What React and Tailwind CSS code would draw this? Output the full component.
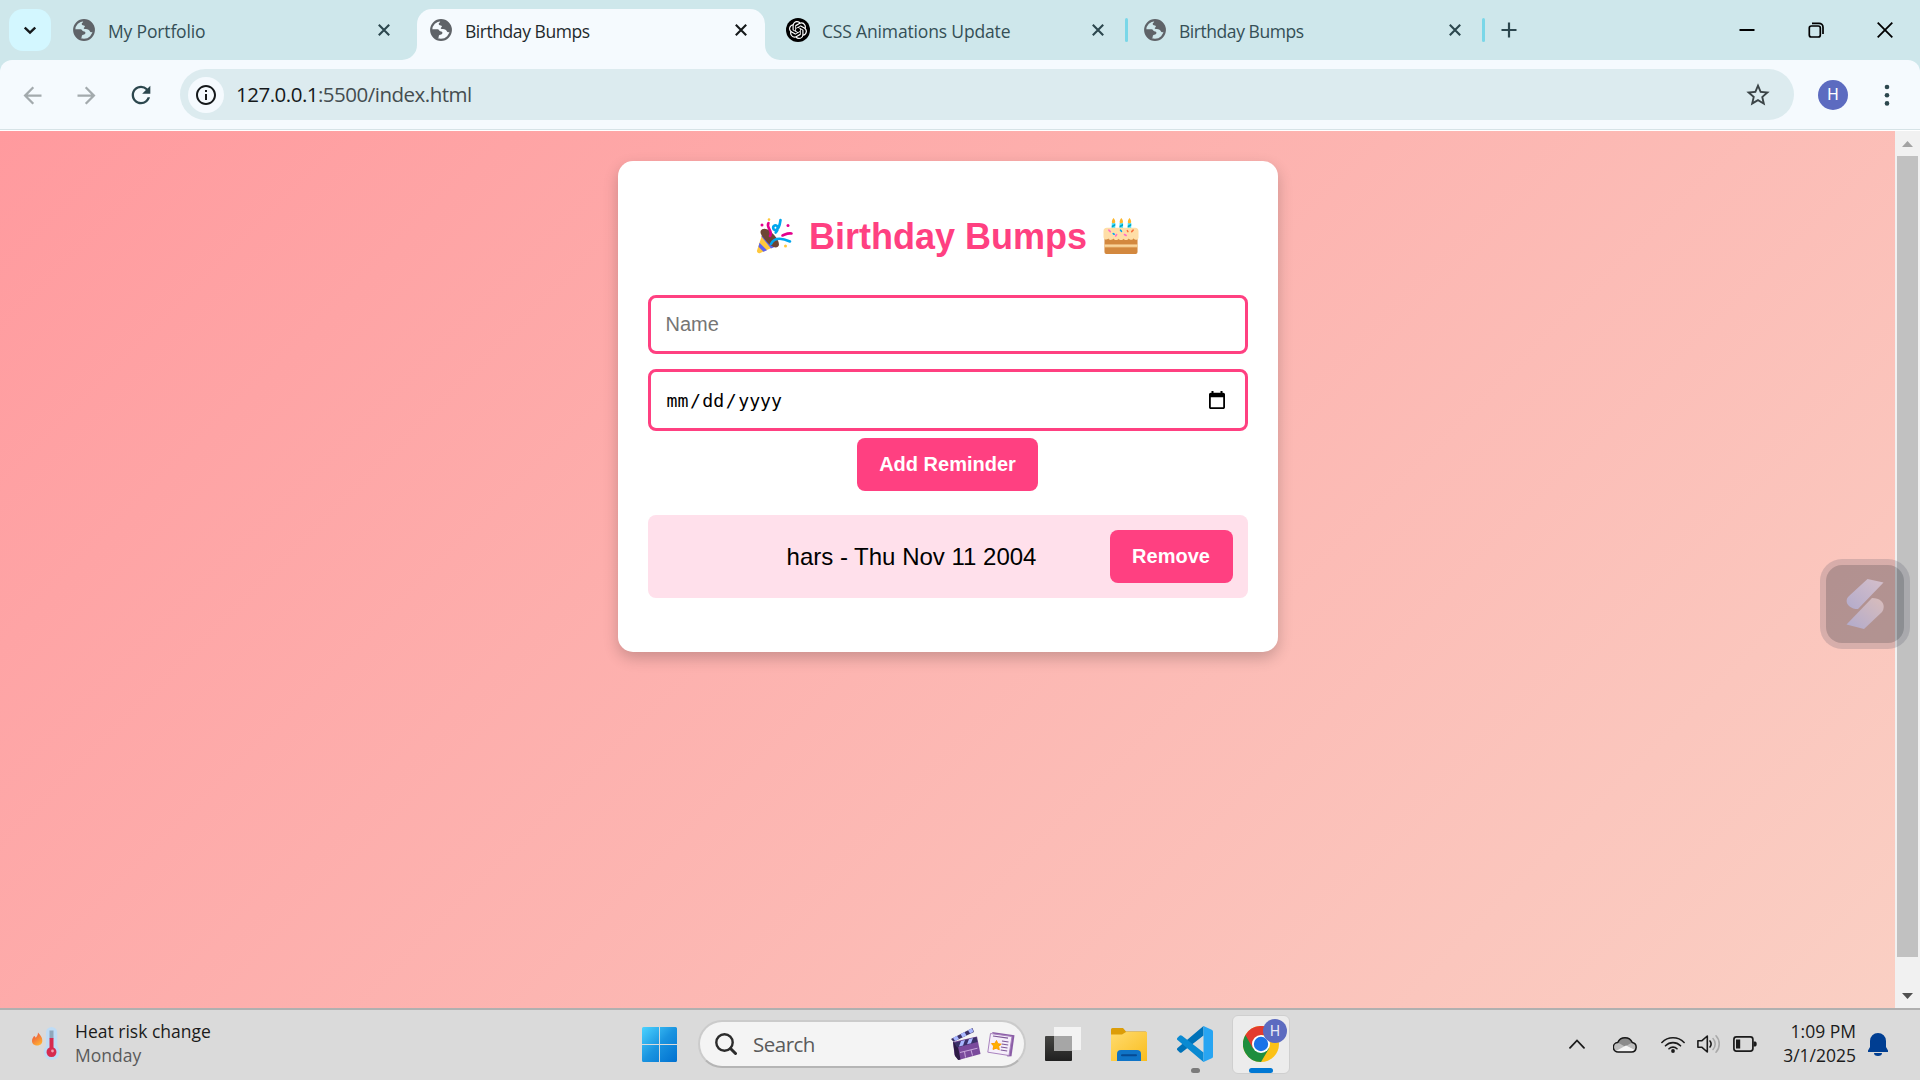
import React from "react";
import { SiOpenai } from "react-icons/si";
import { MdArrowBack, MdArrowForward, MdRefresh, MdStarBorder, MdInfoOutline } from "react-icons/md";

const Globe = () => (
  <svg className="size-[22px] shrink-0" viewBox="0 0 22 22">
    <circle cx="11" cy="11" r="9.8" fill="none" stroke="#5f6368" strokeWidth="2.2" />
    <path
      fill="#5f6368"
      d="M10 1.2c-.3 1 .7 1.6-.3 2.4-1 .7-1.4 1.5-.5 2.3.8.7 2.6.1 2.7 1.3.1 1.100-1.600 1.400-1.100 2.400.7 1.100 3.200.5 4.700 1.100 1.600.6 1.100 2.500 2.800 2.500 1.300 0 2.200-.6 3-1.700C22 7 18 .5 10 1.200ZM1 10.300h6.600c1.600.1 1.400 1.800 2.600 2 1.400.3 2.400.4 2.200 1.900-.3 1.300-2 1.300-3 1.800-1.200.8-.2 3-1.700 3.800C3.500 18.800.5 15 1 10.300Z"
    />
  </svg>
);

const Close = ({ color }) => (
  <svg className="size-3 shrink-0" viewBox="0 0 12 12" stroke={color} strokeWidth="2.1" fill="none">
    <path d="M.8.8 11.200 11.200M11.200.8.8 11.200" />
  </svg>
);

function Tab({ title, active, divider, openai, narrow }) {
  return (
    <div className="flex h-[60px] w-[357px] shrink-0 items-end">
      <div
        className={
          active
            ? "relative flex h-[51px] w-[348px] items-center rounded-t-[15px] bg-[#f5fafe] pb-[9px] pl-[13px] text-[#1f2a2d]"
            : "flex h-[51px] w-[348px] items-center pb-[9px] pl-[13px] text-[#354f56]"
        }
      >
        {active && (
          <>
            <svg className="absolute bottom-0 -left-[15px] size-[15px]" viewBox="0 0 15 15">
              <path d="M15 0v15H0A15 15 0 0 0 15 0Z" fill="#f5fafe" />
            </svg>
            <svg className="absolute -right-[15px] bottom-0 size-[15px]" viewBox="0 0 15 15">
              <path d="M0 0v15h15A15 15 0 0 1 0 0Z" fill="#f5fafe" />
            </svg>
          </>
        )}
        {openai ? (
          <span className="-ml-px flex size-6 items-center justify-center rounded-full bg-black">
            <SiOpenai className="size-[18px] text-white" />
          </span>
        ) : (
          <Globe />
        )}
        <span className={openai ? "ml-[12px] w-[246px] pt-[3px]" : "ml-[13px] w-[246px] pt-[3px]"}>
          <span className={narrow ? "text-[17.5px] tracking-[-0.45px]" : "text-[17.5px] tracking-[-0.16px]"}>{title}</span>
        </span>
        <span className="ml-[24px] flex">
          <Close color={active ? "#15191b" : "#2c474e"} />
        </span>
      </div>
      {divider && <div className="mb-[18px] ml-[3px] h-6 w-[3px] rounded-full bg-[#7ad7e8]" />}
    </div>
  );
}

const TabStrip = () => (
  <header className="flex h-[60px] bg-[#cee7eb]">
    <div className="mt-[9px] mr-[9px] ml-[9px] flex size-[42px] shrink-0 items-center justify-center rounded-[14px] bg-[#d3f7ff]">
      <svg className="size-3" viewBox="0 0 12 12" fill="none" stroke="#15191b" strokeWidth="2.4">
        <path d="m.8 3.500 5.200 5 5.200-5" />
      </svg>
    </div>
    <Tab title="My Portfolio" />
    <Tab title="Birthday Bumps" active narrow />
    <Tab title="CSS Animations Update" openai divider />
    <Tab title="Birthday Bumps" divider narrow />
    <div className="flex w-[40px] items-center pl-[13px]">
      <svg className="size-4" viewBox="0 0 16 16" stroke="#2c474e" strokeWidth="2.2">
        <path d="M8 .5v15M.5 8h15" />
      </svg>
    </div>
    <div className="ml-auto flex h-[60px] items-center gap-[53px] pr-[27px] pb-[1px]">
      <svg className="size-4" viewBox="0 0 16 16" stroke="#000" strokeWidth="2">
        <path d="M.5 8h15" />
      </svg>
      <svg className="size-4" viewBox="0 0 16 16" fill="none" stroke="#000" strokeWidth="1.700">
        <rect x="1.300" y="4" width="11" height="11" rx="2" />
        <path d="M4 1.300h7A4 4 0 0 1 15 5.300V12" />
      </svg>
      <svg className="size-4" viewBox="0 0 16 16" stroke="#000" strokeWidth="1.800">
        <path d="m.7.7 14.600 14.600M15.300.7.7 15.300" />
      </svg>
    </div>
  </header>
);

const Toolbar = () => (
  <div className="bg-[#cee7eb]">
    <div className="flex h-[69px] items-center rounded-t-[12px] bg-[#f5fafe]">
      <div className="flex w-[180px] items-center gap-[27px] pt-[1px] pl-[19px]">
        <MdArrowBack className="size-[27px] text-[#a3aaad]" />
        <MdArrowForward className="size-[27px] text-[#a3aaad]" />
        <MdRefresh className="size-7 text-[#2c474e]" />
      </div>
      <div className="flex h-[51px] w-[1614px] items-center rounded-full bg-[#dcebef]">
        <span className="ml-[8px] flex size-9 items-center justify-center rounded-full bg-[#f5fafe]">
          <MdInfoOutline className="size-6 text-[#15191b]" />
        </span>
        <span className="ml-[12px] text-[20.500px] tracking-[-0.5px] text-[#444d50]">
          <span className="text-[#15191b]">127.0.0.1</span>:5500/index.html
        </span>
        <MdStarBorder className="mr-[22px] ml-auto size-[28px] text-[#3b4447]" />
      </div>
      <span className="ml-6 flex size-[30px] items-center justify-center rounded-full bg-[#5c6bc0] pt-px font-[Roboto] text-[16px] text-white">H</span>
      <svg className="ml-[36px] h-6 w-[6px]" viewBox="0 0 6 24" fill="#2c474e">
        <circle cx="3" cy="4" r="2.300" />
        <circle cx="3" cy="12.200" r="2.300" />
        <circle cx="3" cy="20.400" r="2.300" />
      </svg>
    </div>
    <div className="h-px bg-[#d6e3e7]" />
    <div className="h-px bg-white" />
  </div>
);

const Popper = () => (
  <svg className="h-[36px] w-[37px]" viewBox="0 0 37 36">
    <path d="M7.500 12.500 1 32.500c-.4 1.700 1 3.200 2.800 2.700L22 27Z" fill="#ffc83d" />
    <path d="m5.500 18.500 9.500 12 3.500-1.600L6.900 14.200ZM3.500 24.800l7.500 7.500-3.500 1.500-5-5Z" fill="#5b63f0" />
    <path d="M5.600 11.800c3.500-3 8.600.5 12.400 5 4 4.700 6.600 9.800 3.800 12-2.700 2.200-8-1.300-11.700-5.800-3.700-4.400-7.600-9-4.500-11.200Z" fill="#6d4534" />
    <g fill="none" strokeLinecap="round" strokeWidth="2.600">
      <path d="M12.500 5c-3 4.500 5 8 1.500 13" stroke="#e3008c" />
      <path d="M24.500 2c-.5 4-1.500 9-4.500 10-3 .8-3.800-3.500-1.300-4.500 3.300-1 4.200 4 1 7M15 26c3-6 10-6.500 19-2.500" stroke="#00a6ed" />
      <path d="M26.500 17.500c4-1.500 4.500-2.500 9-2" stroke="#e3008c" />
    </g>
    <circle cx="13" cy="1.600" r="1.300" fill="#ffc83d" />
    <circle cx="6" cy="7" r="1.500" fill="#e3008c" />
    <circle cx="32" cy="7.500" r="1.500" fill="#e3008c" />
    <circle cx="29.500" cy="28" r="1.500" fill="#ffc83d" />
  </svg>
);

const Cake = () => (
  <svg className="mb-px h-[36px] w-[36px]" viewBox="0 0 37 37">
    <path d="M9 5h3.600v8H9ZM17 5h3.600v8H17ZM25.400 5H29v8h-3.600Z" fill="#50e2ff" />
    <path d="m9 8 3.600-2v2L9 10ZM17 8l3.600-2v2L17 10ZM25.400 8 29 6v2l-3.600 2Z" fill="#00a6c8" />
    <path d="M10.800 0c2.500 3 2.200 5.500 0 5.500S8.500 3 10.800 0ZM18.800 0c2.500 3 2.200 5.500 0 5.500S16.500 3 18.800 0ZM27.200 0c2.500 3 2.200 5.500 0 5.500S25 3 27.200 0Z" fill="#fcb62b" />
    <path d="M1.500 18h34v17a2 2 0 0 1-2 2h-30a2 2 0 0 1-2-2Z" fill="#d3883e" />
    <path d="M1.500 27.300h34v2.800h-34Z" fill="#ffdea7" />
    <path d="M1.500 28.400h34v.8h-34Z" fill="#eab978" />
    <path d="M4 10h29c2.300 0 3.500 1.300 3.500 3.500V20c0 3-4 3-5 .8-1.200 2.300-4 2-5 .2-1.400 2.200-4 2.200-5.300.2-1.400 2-4 2-5.200 0-1.300 2-3.900 2-5.200-.2C9 23 6.400 23 5.600 21 4 23 .5 22.300.5 19.500v-6C.5 11.300 1.700 10 4 10Z" fill="#ffdea7" />
    <g strokeWidth="1.600" strokeLinecap="round">
      <path d="m6 12.500 1.500 1.500M22 17l1.800 1M13 18.500l1-1.500" stroke="#ff6dc6" />
      <path d="m18 12.500 1 1.200M10.500 16l1 .7" stroke="#00a6ed" />
      <path d="m29.500 14 1.500-1.500M25 13l.6 1" stroke="#f9703e" />
    </g>
  </svg>
);

const Card = () => (
  <main className="mt-[30px] flex h-[491px] w-[660px] flex-col items-center rounded-[15px] bg-white px-[30px] pt-[52px] font-['Liberation_Sans',Arial,sans-serif] shadow-[0_6px_15px_rgba(0,0,0,0.2)]">
    <h1 className="flex h-[46px] items-center text-[36px] leading-[46px] font-bold text-[#ff4081]">
      <Popper />
      <span className="mx-[16px] pt-px">Birthday Bumps</span>
      <Cake />
    </h1>
    <div className="mt-[36px] flex h-[59px] w-full items-center rounded-[8px] border-[3px] border-[#ff4081] bg-white pb-[2px] pl-[15px] text-[20px] text-[#757575]">
      Name
    </div>
    <div className="mt-[15px] flex h-[62px] w-full items-center rounded-[8px] border-[3px] border-[#ff4081] bg-white pr-5 pl-4 font-['DejaVu_Sans_Mono',monospace] text-[18.200px] text-black">
      <span className="pt-[2px]">mm</span>
      <span className="mx-[1.500px] pt-[2px]">/</span>
      <span className="pt-[2px]">dd</span>
      <span className="mx-[1.500px] pt-[2px]">/</span>
      <span className="pt-[2px]">yyyy</span>
      <svg className="ml-auto h-[18px] w-4" viewBox="0 0 16 18">
        <path fillRule="evenodd" d="M2.500 0h2v1.800h7V0h2v1.800h.7c1 0 1.800.8 1.800 1.700v12.700c0 1-.8 1.800-1.800 1.800H1.800C.8 18 0 17.200 0 16.200V3.500c0-.9.8-1.700 1.800-1.700h.7ZM1.800 6.200v10h12.400v-10Z" />
      </svg>
    </div>
    <button className="mt-[7px] h-[53px] w-[181px] rounded-[8px] bg-[#ff4081] pb-[2px] text-[20px] font-bold text-white">Add Reminder</button>
    <div className="mt-6 flex h-[83px] w-full items-center rounded-[8px] bg-[#ffe0eb] px-[15px]">
      <span className="grow pl-[76px] text-center text-[24px] text-black">hars - Thu Nov 11 2004</span>
      <button className="ml-[25px] h-[53px] w-[123px] rounded-[8px] bg-[#ff4081] pb-[2px] text-[20px] font-bold text-white">Remove</button>
    </div>
  </main>
);

const Scrollbar = () => (
  <aside className="flex w-[25px] flex-col items-center bg-[#f1f1f1]">
    <svg className="h-[25px] w-[11px]" viewBox="0 0 11 25">
      <path d="m0 16 5.500-6 5.500 6Z" fill="#a3a3a3" />
    </svg>
    <div className="h-[801px] w-[21px] bg-[#c1c1c1]" />
    <svg className="mt-[26px] h-[25px] w-[11px]" viewBox="0 0 11 25">
      <path d="m0 10 5.500 6 5.500-6Z" fill="#505050" />
    </svg>
  </aside>
);

const Widget = () => (
  <div className="absolute top-[428px] right-[10px] flex size-[90px] items-center justify-center rounded-[22px] bg-[#4c4b60]/20">
    <div className="flex size-[78px] shrink-0 items-center justify-center rounded-[16px] bg-[#000912]/17">
      <svg className="h-[50px] w-[38px]" viewBox="0 0 38 50">
        <defs>
          <linearGradient id="sa" x1="1" y1="0" x2="0" y2="1">
            <stop stopColor="#d5bfca" />
            <stop offset="1" stopColor="#b3abcb" />
          </linearGradient>
          <linearGradient id="sb" x1="1" y1="0" x2="0" y2="1">
            <stop stopColor="#d9bdbb" />
            <stop offset="1" stopColor="#b0aacd" />
          </linearGradient>
        </defs>
        <path d="m21.500 0 16 3.500L12 30C2 30-2.500 22 3 17Z" fill="url(#sa)" />
        <path d="M26 19c11 0 14 8 10 14L18 50 .5 45.500Z" fill="url(#sb)" />
      </svg>
    </div>
  </div>
);

const Weather = () => (
  <svg className="h-[36px] w-[30px]" viewBox="0 0 30 36">
    <defs>
      <linearGradient id="fl" x1="0" y1="0" x2="0.600" y2="1">
        <stop stopColor="#e8473f" />
        <stop offset="1" stopColor="#ffad33" />
      </linearGradient>
    </defs>
    <path d="M6 6.500C8 9 10.500 11 10.300 15c0 6-10.300 6-10.300 0 0-3 1.500-3.500 2-5 1 .3 1.400 1 1.600 1.700C5 10.500 6 9 6 6.500Z" fill="url(#fl)" />
    <path d="M14 6.500a5.600 5.600 0 0 1 11.200 0v13.800a8 8 0 1 1-11.200 0Z" fill="#bfdcf5" />
    <path d="M17.500 4.500h4v8h-4Z" fill="#8fa7bb" />
    <path d="M17.500 12h4v9.500a5 5 0 1 1-4 0Z" fill="#d62b50" />
    <circle cx="20.500" cy="25" r="1.400" fill="#f0a0b4" />
  </svg>
);

const StartLogo = () => (
  <svg className="size-[35px]" viewBox="0 0 35 35">
    <defs>
      <linearGradient id="win" x1="0" y1="0" x2="1" y2="1">
        <stop stopColor="#4cd3ff" />
        <stop offset="0.500" stopColor="#1a94e0" />
        <stop offset="1" stopColor="#0070d0" />
      </linearGradient>
    </defs>
    <path d="M1.500 0H17v17H0V1.500A1.500 1.500 0 0 1 1.500 0ZM18 0h15.500A1.500 1.500 0 0 1 35 1.500V17H18ZM0 18h17v17H1.500A1.500 1.500 0 0 1 0 33.500ZM18 18h17v15.500a1.500 1.500 0 0 1-1.500 1.500H18Z" fill="url(#win)" />
  </svg>
);

const Clapper = () => (
  <svg className="h-[33px] w-[30px]" viewBox="0 0 30 33">
    <path d="m2 14 24-5.500L29.500 26 7.500 32 3.500 27Z" fill="#7a4a9c" />
    <path d="m2 14 4.500 2 3 15.500-2.300.5-3.200-4Z" fill="#2d1b45" />
    <path d="M3 14.800 25.500 9l1 5L6 19.500Z" fill="#3b3168" />
    <path d="m10 13 4-1-2 5.500-4 1ZM18 11l4-1-2 5.300-4 1Z" fill="#a9b7ff" />
    <path d="M0 11 21.500 0l1.500 4L2.500 13.800Z" fill="#3b3168" />
    <path d="m2 9.700 4-2 2 3.400-4 2ZM9.500 6l4-2 2 3.400-4 2ZM17 2.300 21 .2l1.500 3.600-3.500 1.800Z" fill="#a9b7ff" />
    <path d="m9 24.500 17.500-4.300M13.500 23.500l1 6M20 22l1.500 5.500" stroke="#c9a8dc" fill="none" />
  </svg>
);

const News = () => (
  <svg className="h-[25px] w-[28px]" viewBox="0 0 28 25">
    <path d="m5 0 22.500 3.200-3 21-4 .3Z" fill="#8a5ca6" />
    <path d="M3.500 1.500 25 4.500l-3 19L.8 20.200Z" fill="#f5eefa" stroke="#a882bd" />
    <path d="m6 4 15 2.200M15 9l6.500 1M14.700 12l6.500 1M14 15l6.500 1M13.700 18l6.500 1" stroke="#7d5797" strokeWidth="1.200" />
    <path d="m9.500 8.500 1.300 3.200 3.400.5-2.600 2.200.7 3.400-3.100-1.600-3.200 1.200.7-3.300-2.200-2.500 3.400-.2Z" fill="#ffb000" stroke="#ff9d00" />
  </svg>
);

const TaskView = () => (
  <svg className="h-[35px] w-[36px]" viewBox="0 0 36 35">
    <defs>
      <linearGradient id="tv" x1="0" y1="0" x2="0" y2="1">
        <stop stopColor="#454543" />
        <stop offset="1" stopColor="#202020" />
      </linearGradient>
    </defs>
    <rect y="9" width="27" height="25" rx="1" fill="url(#tv)" />
    <path d="M9 0h27v23H9Z" fill="#f4f4f4" opacity=".95" />
    <path d="M9 9h18v15H9Z" fill="#a6a6a6" />
  </svg>
);

const Folder = () => (
  <svg className="h-[33px] w-[36px]" viewBox="0 0 36 33">
    <defs>
      <linearGradient id="fo" x1="0" y1="0" x2="1" y2="1">
        <stop stopColor="#ffdb6e" />
        <stop offset="1" stopColor="#f9bd1e" />
      </linearGradient>
    </defs>
    <path d="M1.500 0H12l3 3.500h19.500A1.500 1.500 0 0 1 36 5v6H0V1.500A1.500 1.500 0 0 1 1.500 0Z" fill="#dc9d08" />
    <path d="M0 6.500h11l4-2.500h21v29H0Z" fill="url(#fo)" />
    <path d="M6 33v-7a4 4 0 0 1 4-4h16a4 4 0 0 1 4 4v7Z" fill="#0f74c7" />
    <path d="M11 27.300h14" stroke="#064a93" strokeWidth="2" strokeLinecap="round" />
  </svg>
);

const Code = () => (
  <svg className="size-[36px]" viewBox="0 0 36 36">
    <path d="M26.500 0v9.500L5 26.300c-.8.7-1.800.7-2.500 0l-2-2c-.7-.7-.7-1.700 0-2.400Z" fill="#0072b8" />
    <path d="M26.500 36v-9.500L5 9.700c-.8-.7-1.800-.7-2.500 0l-2 2c-.7.7-.7 1.700 0 2.400Z" fill="#0a8ad2" />
    <path d="M26.500 0 34.700 3.800A2 2 0 0 1 36 5.700v24.600a2 2 0 0 1-1.300 1.900L26.500 36c-.6.300 0-1 0-2V2c0-1-.5-1.800 0-2Z" fill="#28a5f2" />
  </svg>
);

const Chrome = () => (
  <svg className="size-[36px]" viewBox="0 0 36 36">
    <circle cx="18" cy="18" r="18" fill="#fbc116" />
    <path d="M18 18 2.400 9A18 18 0 0 0 18 36l8-13.500Z" fill="#1e8e3e" />
    <path d="M2.400 9A18 18 0 0 1 33.600 9H18L10 22.500Z" fill="#e33b2e" />
    <circle cx="18" cy="18" r="9" fill="#fff" />
    <circle cx="18" cy="18" r="7.200" fill="#1a73e8" />
  </svg>
);

const Tray = () => (
  <>
    <svg className="h-[10px] w-4" viewBox="0 0 16 10" fill="none" stroke="#1b1b1b" strokeWidth="1.800" strokeLinecap="round">
      <path d="m1 8.800 7-7.300 7 7.300" />
    </svg>
    <svg className="ml-[28px] h-[17px] w-6" viewBox="0 0 24 17">
      <path d="M5.500 16A4.700 4.700 0 0 1 4.700 6.500a8 8 0 0 1 14.600 0A4.800 4.800 0 0 1 18.500 16Z" fill="#bdbdbd" />
      <path d="M4.700 6.500a8 8 0 0 1 14.600 0L12 10.500Z" fill="#8a8a8a" />
      <path d="M3 15 13 9.500 22 14l-3.500 2h-13Z" fill="#f3f3f3" />
      <path d="M5.500 16A4.700 4.700 0 0 1 4.700 6.500a8 8 0 0 1 14.600 0A4.800 4.800 0 0 1 18.500 16Z" fill="none" stroke="#151515" strokeWidth="1.500" />
    </svg>
    <svg className="ml-[24px] h-[17px] w-6" viewBox="0 0 24 17" fill="none" stroke="#1b1b1b" strokeWidth="1.600" strokeLinecap="round">
      <path d="M.9 6.500a15.500 15.500 0 0 1 22.200 0M4.500 9.800a10.500 10.500 0 0 1 15 0M8 12.800a5.600 5.600 0 0 1 8 0" />
      <circle cx="12" cy="15" r="1.900" fill="#1b1b1b" stroke="none" />
    </svg>
    <svg className="ml-3 h-[20px] w-6" viewBox="0 0 24 20" fill="none" stroke="#1b1b1b" strokeWidth="1.600" strokeLinecap="round" strokeLinejoin="round">
      <path d="M.9 6.800h3.800L10.300 2v16l-5.600-4.800H.9ZM13 7a5 5 0 0 1 0 6" />
      <path d="M16 4.500a8 8 0 0 1 0 11M19 1.800a12 12 0 0 1 0 16.400" stroke="#a9a9a9" />
    </svg>
    <svg className="ml-3 h-4 w-6" viewBox="0 0 24 16">
      <rect x=".9" y=".9" width="19" height="14.200" rx="2.500" fill="none" stroke="#1b1b1b" strokeWidth="1.700" />
      <rect x="3" y="3.500" width="4.200" height="9" fill="#1b1b1b" />
      <path d="M20.500 5.500h1.700c2 0 2 5 0 5h-1.700Z" fill="#1b1b1b" />
    </svg>
  </>
);

const Taskbar = () => (
  <footer className="flex h-[72px] border-t-2 border-[#b0b0b0] bg-[#dadada]">
    <div className="flex w-[642px] pt-4 pl-8">
      <Weather />
      <div className="ml-[13px] text-[17.500px] leading-6 text-[#1b1b1b]">
        <p className="-mt-[7px]">Heat risk change</p>
        <p className="text-[#5a5a5a]">Monday</p>
      </div>
    </div>
    <div className="pt-[17px]">
      <StartLogo />
    </div>
    <div className="mt-[10px] ml-[21px] flex h-[48px] w-[328px] items-center rounded-full border-2 border-t-[#cbcbcb] border-r-[#cbcbcb] border-b-[#b5b5b5] border-l-[#cbcbcb] bg-[#f4f4f4] pl-[15px]">
      <svg className="size-[22px]" viewBox="0 0 22 22" fill="none" stroke="#2b2b2b" strokeWidth="2.400" strokeLinecap="round">
        <circle cx="9.500" cy="9.500" r="8.200" />
        <path d="m15.500 15.500 5 5" strokeWidth="3" />
      </svg>
      <span className="ml-4 w-[198px] text-[20.500px] tracking-[-0.5px] text-[#5a5a5a]">Search</span>
      <Clapper />
      <span className="ml-[6px]">
        <News />
      </span>
    </div>
    <div className="mt-[17px] ml-[19px]">
      <TaskView />
    </div>
    <div className="mt-[18px] ml-[30px]">
      <Folder />
    </div>
    <div className="mt-[16px] ml-[30px] flex flex-col items-center gap-[6px]">
      <Code />
      <span className="h-[5px] w-[9px] rounded-full bg-[#7b7b7b]" />
    </div>
    <div className="relative mt-[5px] ml-[19px] flex h-[59px] w-[58px] flex-col items-center gap-[6px] rounded-[6px] border border-[#cfcfcf] bg-[#ececec] pt-[10px]">
      <Chrome />
      <span className="h-[5px] w-6 rounded-full bg-[#0078d4]" />
      <span className="absolute top-[3px] right-[2px] flex size-6 items-center justify-center rounded-full bg-[#5c6bc0] pt-px font-[Roboto] text-[14px] text-[#e8eaf6]">H</span>
    </div>
    <div className="ml-auto flex h-[68px] items-center pr-8">
      <Tray />
      <div className="ml-[23px] w-[76px] pb-[2px] text-right text-[17.500px] leading-6 whitespace-nowrap text-[#1b1b1b]">
        <p>1:09 PM</p>
        <p>3/1/2025</p>
      </div>
      <svg className="ml-[12px] h-[23px] w-5" viewBox="0 0 20 23" fill="#003e92">
        <path d="M10 0a8 8 0 0 1 8 8v6l2 3.500V19H0v-1.500L2 14V8a8 8 0 0 1 8-8ZM6 20h8a4 3 0 0 1-8 0Z" />
      </svg>
    </div>
  </footer>
);

export default function App() {
  return (
    <div className="flex h-[1080px] w-[1920px] flex-col overflow-hidden font-['Open_Sans','Noto_Sans',sans-serif]">
      <TabStrip />
      <Toolbar />
      <div className="relative flex h-[877px] overflow-hidden">
        <div className="flex h-[905px] w-[1895px] shrink-0 items-start justify-center bg-[linear-gradient(135deg,#ff9a9e,#fad0c4)]">
          <Card />
        </div>
        <Scrollbar />
        <Widget />
      </div>
      <Taskbar />
    </div>
  );
}
